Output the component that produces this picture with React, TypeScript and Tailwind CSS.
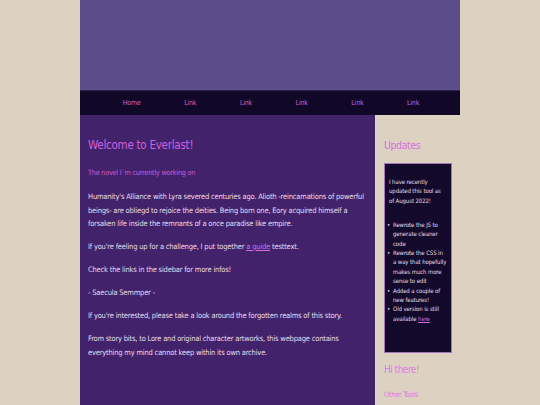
const font = { fontFamily: '"DejaVu Sans Condensed", "Liberation Sans", sans-serif' };

const navItems = ['Home', 'Link', 'Link', 'Link', 'Link', 'Link'];

function Bullet({ children }: { children: React.ReactNode }) {
  return (
    <li className="flex">
      <span className="w-[6px] shrink-0">•</span>
      <span>{children}</span>
    </li>
  );
}

function Sidebar() {
  return (
    <aside className="w-[85px] shrink-0 bg-[#ddd2c1] pl-[9px] pr-[8px] pt-[23px]">
      <h2 className="text-[10.5px] leading-[14px] tracking-[-0.4px] text-[#d46fe0]">Updates</h2>
      <div className="mt-[11px] border border-[#a874b8] bg-[#130a2b] px-[4px] pt-[13px] pb-[29px] text-[6px] leading-[9.4px] tracking-[-0.1px] text-[#e6dde8]">
        <p>I have recently updated this tool as of August 2022!</p>
        <ul className="mt-[14.5px] -ml-[2px]">
          <Bullet>Rewrote the JS to generate cleaner code</Bullet>
          <Bullet>Rewrote the CSS in a way that hopefully makes much more sense to edit</Bullet>
          <Bullet>Added a couple of new features!</Bullet>
          <Bullet>
            Old version is still available <a className="text-[#d46fe0] underline">here</a>
          </Bullet>
        </ul>
      </div>
      <h2 className="mt-[9px] text-[10px] leading-[16px] tracking-[-0.5px] text-[#e07ae8]">Hi there!</h2>
      <h3 className="mt-[11px] text-[7.5px] leading-[11px] tracking-[-0.35px] text-[#e07ae8]">Other Tools</h3>
    </aside>
  );
}

export default function App() {
  return (
    <div className="flex h-[405px] justify-center overflow-hidden bg-[#ddd2c1]" style={font}>
      <div className="flex w-[380px] flex-col">
        <header className="h-[90px] shrink-0 bg-[#5c4d8a]" />
        <nav className="flex h-[25px] shrink-0 items-center border-t border-[#2d2150] bg-[#110827] pl-[21px]">
          {navItems.map((item, i) => (
            <a key={i} className="px-[21.8px] text-[7px] tracking-[-0.2px] text-[#c561d6]">
              {item}
            </a>
          ))}
        </nav>
        <div className="flex flex-1">
          <main className="w-[295px] shrink-0 bg-[#42236b] pl-[8px] pr-[6px] pt-[21px] text-[7.5px] leading-[13.5px] tracking-[-0.2px] text-[#e6dde9]">
            <h1 className="text-[11.5px] leading-[18px] tracking-[-0.25px] text-[#d15fe0]">Welcome to Everlast!</h1>
            <h3 className="mt-[13px] text-[7.2px] leading-[12px] tracking-[-0.2px] text-[#d05ad8]">The novel I´m currently working on</h3>
            <p className="mt-[11px]">
              Humanity's Alliance with Lyra severed centuries ago. Alioth -reincarnations of powerful beings- are obliegd to rejoice the deities. Being born one, Eory acquired himself a forsaken life inside the remnants of a once paradise like empire.
            </p>
            <p className="mt-[9.5px]">
              If you're feeling up for a challenge, I put together{' '}
              <a className="text-[#d070e0] underline">a guide</a> testtext.
            </p>
            <p className="mt-[9.5px]">Check the links in the sidebar for more infos!</p>
            <p className="mt-[9.5px]">- Saecula Semmper -</p>
            <p className="mt-[9.5px]">If you're interested, please take a look around the forgotten realms of this story.</p>
            <p className="mt-[9.5px]">
              From story bits, to Lore and original character artworks, this webpage contains everything my mind cannot keep within its own archive.
            </p>
          </main>
          <Sidebar />
        </div>
      </div>
    </div>
  );
}
